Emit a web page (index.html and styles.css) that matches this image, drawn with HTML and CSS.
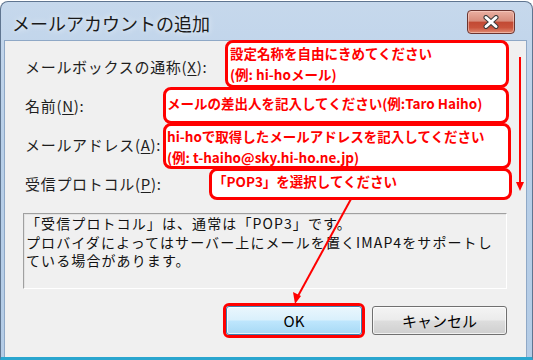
FILE: index.html
```html
<!DOCTYPE html>
<html>
<head>
  <title>メールアカウントの追加</title>
  <link rel="stylesheet" href="styles.css">
</head>
<body>
  <div class="screen">
    <div class="window">
      <div class="titlebar">
        <span class="title">メールアカウントの追加</span>
        <div class="close">
          <svg width="18" height="14" viewBox="0 0 18 14">
            <path d="M4 2.5 L14 11.5 M14 2.5 L4 11.5" stroke="#3a3a3a" stroke-width="5" stroke-linecap="round"/>
            <path d="M4 2.5 L14 11.5 M14 2.5 L4 11.5" stroke="#ffffff" stroke-width="3" stroke-linecap="round"/>
          </svg>
        </div>
      </div>

      <div class="client">
        <div class="form">
          <div class="label">メールボックスの通称(<u>X</u>):</div>
          <div class="label">名前(<u>N</u>):</div>
          <div class="label">メールアドレス(<u>A</u>):</div>
          <div class="label">受信プロトコル(<u>P</u>):</div>
        </div>

        <div class="desc">
          <div class="desc-line">「受信プロトコル」は、通常は「POP3」です。</div>
          <div class="desc-line">プロバイダによってはサーバー上にメールを置くIMAP4をサポートし</div>
          <div class="desc-line">ている場合があります。</div>
        </div>

        <div class="buttons">
          <div class="ok-ring"><div class="btn btn-ok">OK</div></div>
          <div class="btn">キャンセル</div>
        </div>
      </div>
    </div>

    <!-- annotations -->
    <div class="note note-mailbox">設定名称を自由にきめてください<br>(例: hi-hoメール)</div>
    <div class="note note-name">メールの差出人を記入してください(例:Taro Haiho)</div>
    <div class="note note-address">hi-hoで取得したメールアドレスを記入してください<br>(例: t-haiho@sky.hi-ho.ne.jp)</div>
    <div class="note note-protocol">「POP3」を選択してください</div>

    <svg class="arrows" width="533" height="360" viewBox="0 0 533 360">
      <line x1="520" y1="57" x2="520" y2="183" stroke="#ff0000" stroke-width="2"/>
      <polygon points="516,182 524,182 520,191" fill="#ff0000"/>
      <line x1="351" y1="199" x2="298" y2="296" stroke="#ff0000" stroke-width="2"/>
      <polygon points="293,292 301,296 295,304" fill="#ff0000"/>
    </svg>
  </div>
</body>
</html>
```

FILE: styles.css
```css
body {
  margin: 0;
  background: #ffffff;
  font-family: "Noto Sans CJK JP", "Noto Sans", sans-serif;
}
.screen {
  position: relative;
  width: 533px;
  height: 360px;
  overflow: hidden;
}
.window {
  margin-top: 1px;
  height: 359px;
  box-sizing: border-box;
  display: flex;
  flex-direction: column;
  border: 1px solid #5f7590;
  border-bottom: 3px solid #2aa6cf;
  border-radius: 8px 8px 0 0;
  background: linear-gradient(180deg, #c6d8ec 0%, #b8cfe8 40%, #b4cce6 100%);
  padding: 0 5px 0 3px;
}
.titlebar {
  height: 38px;
  display: flex;
  align-items: center;
  justify-content: space-between;
}
.title {
  margin-left: 8px;
  margin-top: 3px;
  font-size: 18px;
  color: #1a1a1a;
  text-shadow: 0 0 6px rgba(255, 255, 255, 0.9);
}
.close {
  width: 46px;
  height: 22px;
  margin-right: 12px;
  margin-top: 2px;
  display: flex;
  align-items: center;
  justify-content: center;
  border: 1px solid #6b3530;
  border-radius: 4px;
  background: linear-gradient(180deg, #eab0a2 0%, #d88d7c 45%, #c24a34 52%, #c9533c 75%, #e08b72 100%);
  box-shadow: inset 0 0 0 1px rgba(255, 220, 210, 0.5);
}

/* client area */
.client {
  flex: 1;
  background: #f0f0f0;
  border: 1px solid #8fa8c6;
  border-bottom: none;
}
.form {
  padding: 6px 0 0 20px;
  display: grid;
  grid-auto-rows: 39px;
}
.label {
  display: flex;
  align-items: center;
  font-size: 15px;
  letter-spacing: 0.7px;
  color: #1e1e1e;
}
.label u {
  text-underline-offset: 2px;
}
.desc {
  margin: 10px 0 0 18px;
  width: 484px;
  height: 76px;
  box-sizing: border-box;
  border: 1px solid;
  border-color: #a0a0a0 #ffffff #ffffff #a0a0a0;
  box-shadow: inset 1px 1px 0 #e3e3e3;
  padding: 0 0 0 2px;
  color: #111111;
  white-space: nowrap;
}
.desc-line {
  height: 18.5px;
  font-size: 14px;
  line-height: 18.5px;
  letter-spacing: 1.1px;
}
.buttons {
  display: flex;
  justify-content: flex-end;
  align-items: center;
  gap: 7px;
  margin-top: 14px;
  padding-right: 19px;
}
.ok-ring {
  border: 3px solid #ff0000;
  border-radius: 6px;
  display: flex;
}
.btn {
  width: 133px;
  height: 27px;
  display: flex;
  align-items: center;
  justify-content: center;
  border: 1px solid #707070;
  border-radius: 3px;
  background: linear-gradient(180deg, #f4f4f4 0%, #ebebeb 48%, #dddddd 52%, #cfcfcf 100%);
  box-shadow: inset 0 0 0 1px rgba(255, 255, 255, 0.7);
  font-size: 15px;
  color: #000000;
}
.btn-ok {
  width: 134px;
  border-color: #3c7fb1;
  background: linear-gradient(180deg, #eaf6fd 0%, #d9f0fc 48%, #bee6fd 52%, #a7d9f5 100%);
}

/* annotations */
.note {
  position: absolute;
  box-sizing: border-box;
  background: #ffffff;
  border: 3px solid #ff0000;
  border-radius: 8px;
  color: #ff0000;
  font-size: 13.5px;
  font-weight: 700;
  line-height: 21px;
  white-space: nowrap;
}
.note-mailbox {
  left: 225px;
  top: 40px;
  width: 284px;
  height: 48px;
  padding: 0 0 0 2px;
}
.note-name {
  left: 163px;
  top: 87px;
  width: 346px;
  height: 37px;
  padding: 3px 0 0 1px;
}
.note-address {
  left: 163px;
  top: 123px;
  width: 348px;
  height: 46px;
  padding: 0 0 0 1px;
}
.note-protocol {
  left: 209px;
  top: 168px;
  width: 303px;
  height: 32px;
  padding: 0 0 0 1px;
}
.arrows {
  position: absolute;
  left: 0;
  top: 0;
  pointer-events: none;
}
```
